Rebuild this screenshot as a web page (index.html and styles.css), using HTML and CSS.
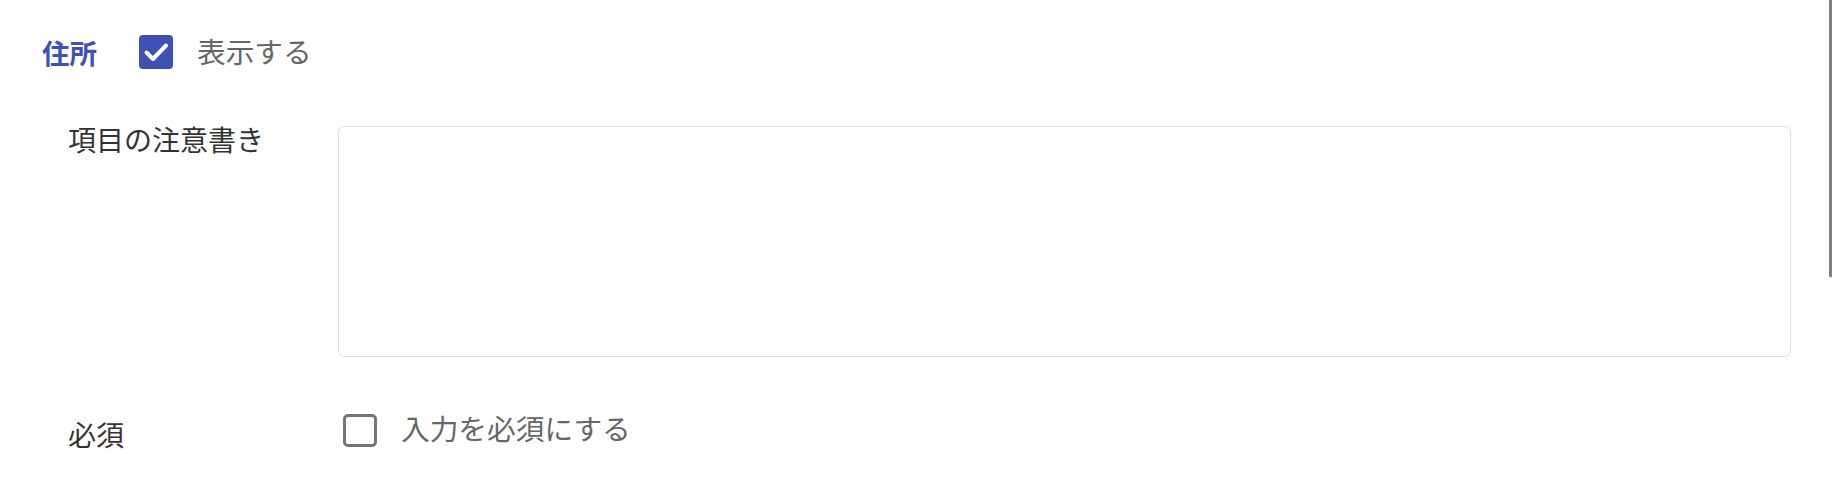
FILE: index.html
```html
<!DOCTYPE html>
<html lang="ja">
<head>
    <meta charset="UTF-8">
    <meta name="viewport" content="width=device-width, initial-scale=1.0">
    <title>住所</title>
    <link rel="stylesheet" href="styles.css">
</head>
<body>
    <div class="section">
        <div class="section-header">
            <span class="section-title">住所</span>
            <label class="check">
                <svg class="box checked" viewBox="0 0 34 34" width="34" height="34">
                    <rect x="0" y="0" width="34" height="34" rx="4" fill="#4051b5"/>
                    <polyline points="7.5,17.5 14,24 27,10.5" fill="none" stroke="#fff" stroke-width="4" stroke-linecap="round" stroke-linejoin="round"/>
                </svg>
                <span class="check-label">表示する</span>
            </label>
        </div>

        <div class="field field-note">
            <div class="field-label">項目の注意書き</div>
            <textarea class="note"></textarea>
        </div>

        <div class="field field-required">
            <div class="field-label">必須</div>
            <label class="check">
                <svg class="box" viewBox="0 0 34 34" width="34" height="34">
                    <rect x="1.5" y="1.5" width="31" height="30" rx="3.5" fill="#fff" stroke="#757575" stroke-width="3"/>
                </svg>
                <span class="check-label">入力を必須にする</span>
            </label>
        </div>
    </div>

    <div class="scroll-thumb"></div>
</body>
</html>
```

FILE: styles.css
```css
body {
    margin: 0;
    background-color: #fff;
    font-family: "Noto Sans CJK JP", "Noto Sans", sans-serif;
    color: #333;
}

.section {
    padding: 35px 41px 0 42px;
}

.section-header {
    display: flex;
    align-items: center;
    height: 34px;
}

.section-title {
    font-size: 27.5px;
    font-weight: bold;
    color: #4051b5;
    line-height: 34px;
    margin-right: 42px;
}

.check {
    display: flex;
    align-items: center;
}

.box {
    display: block;
    flex-shrink: 0;
}

.check-label {
    font-size: 28.7px;
    line-height: 34px;
    color: #666;
    margin-left: 24px;
    padding-bottom: 6px;
}

.section-header .check-label {
    padding-bottom: 2px;
}

.field {
    display: grid;
    grid-template-columns: 270px 1fr;
    padding-left: 26px;
}

.field-note {
    margin-top: 57px;
}

.field-label {
    font-size: 28px;
    line-height: 26px;
    color: #333;
}

.note {
    display: block;
    box-sizing: border-box;
    width: 100%;
    height: 231px;
    border: 1px solid #e0e0e0;
    border-radius: 6px;
    resize: none;
    font-family: inherit;
    font-size: 28px;
}

.field-required {
    margin-top: 54px;
}

.field-required .field-label {
    line-height: 34px;
    padding-top: 6px;
}

.field-required .check {
    padding-left: 5px;
}

.scroll-thumb {
    position: absolute;
    top: 0;
    right: 0;
    width: 3px;
    height: 277px;
    background-color: #808080;
}
```
